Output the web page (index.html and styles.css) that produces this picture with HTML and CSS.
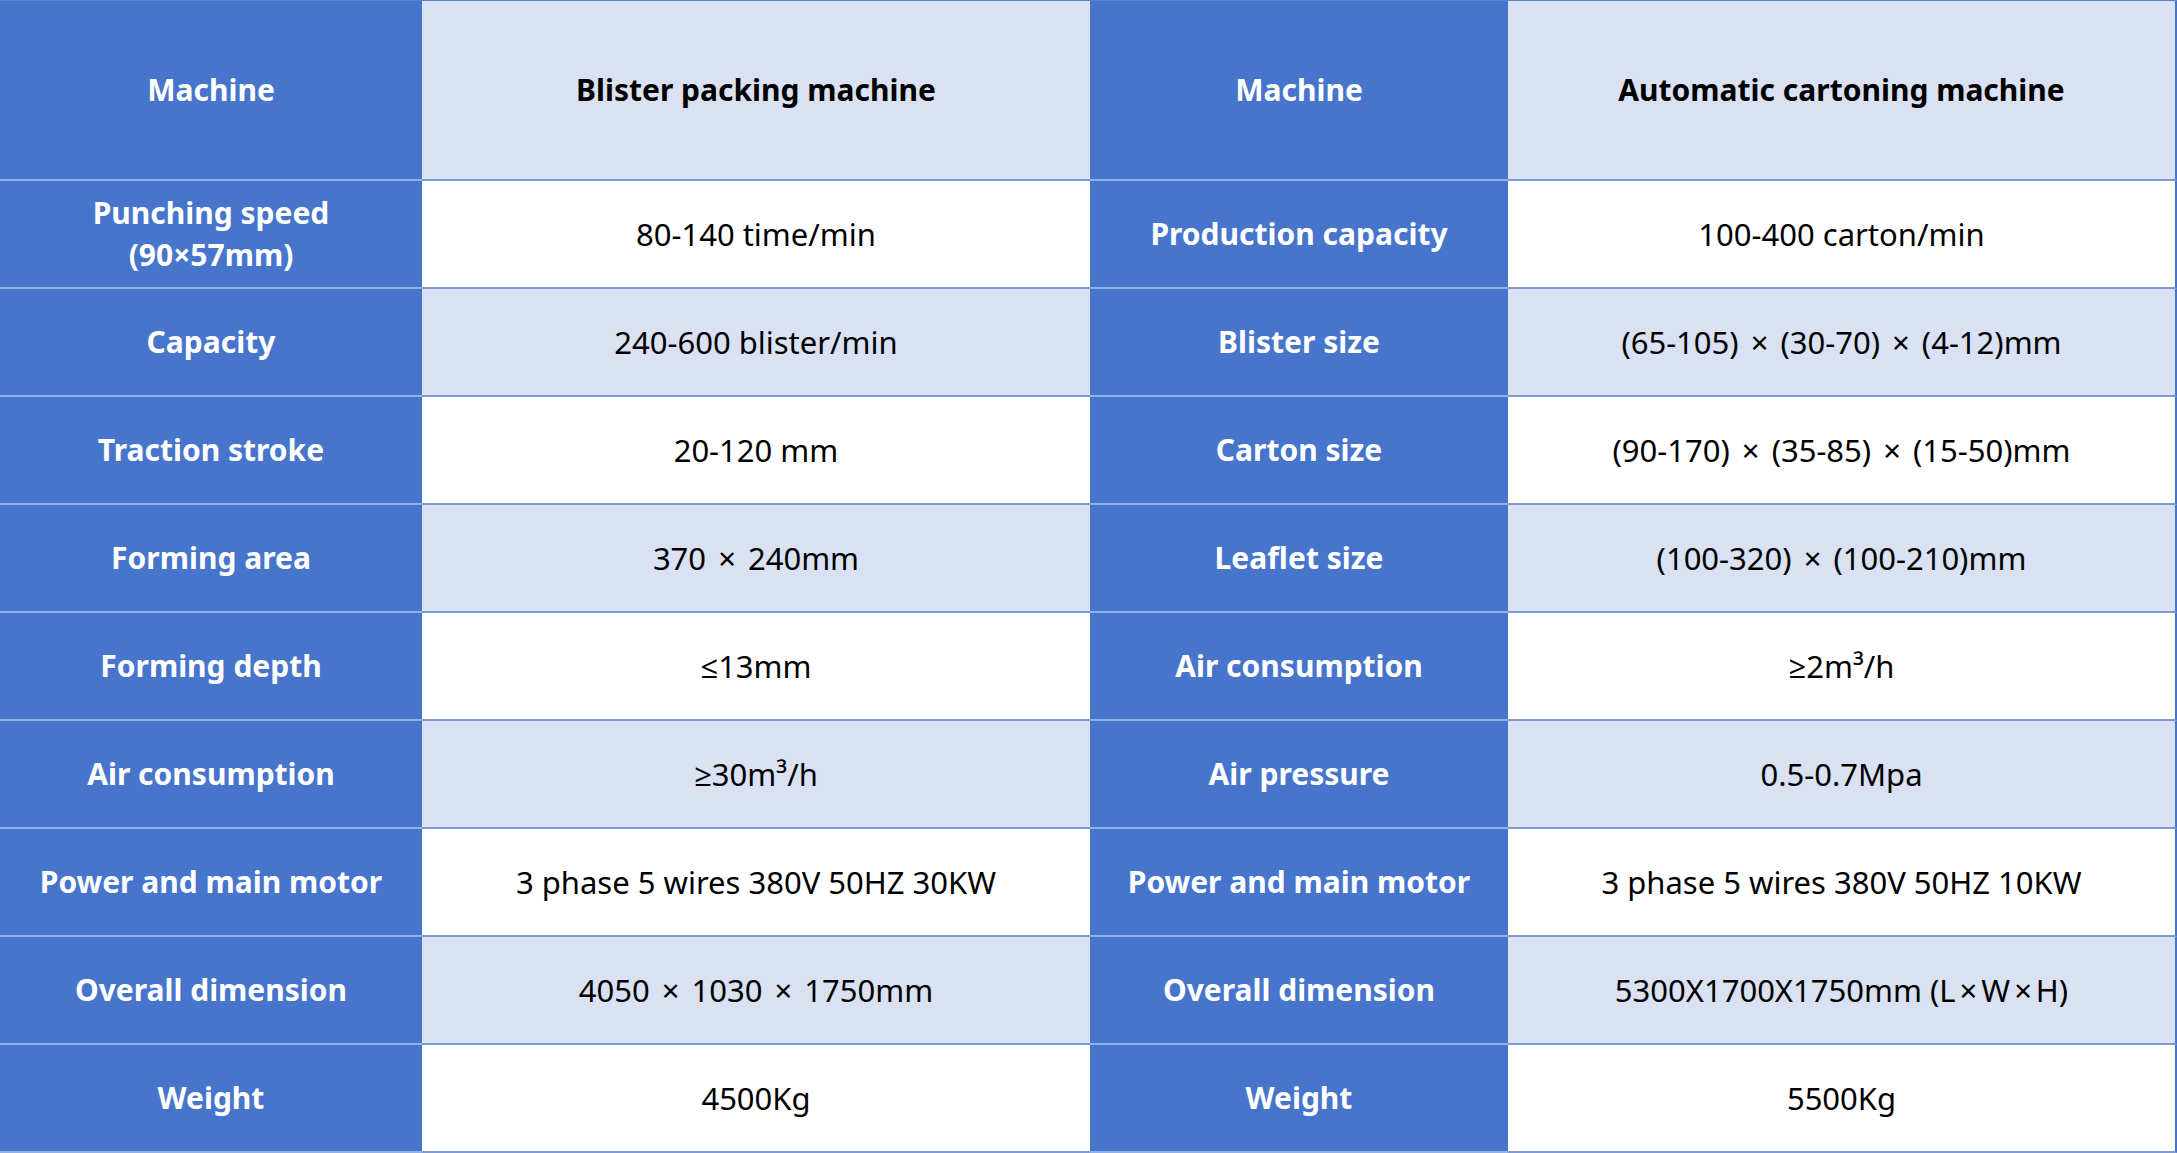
FILE: index.html
```html
<!DOCTYPE html>
<html>
<head>
<meta charset="utf-8">
<link rel="stylesheet" href="styles.css">
</head>
<body>
<div class="table">
  <div class="cell key head">Machine</div>
  <div class="cell val light head bold">Blister packing machine</div>
  <div class="cell key head">Machine</div>
  <div class="cell val light head bold last">Automatic cartoning machine</div>

  <div class="cell key">Punching speed<br>(90×57mm)</div>
  <div class="cell val">80-140 time/min</div>
  <div class="cell key">Production capacity</div>
  <div class="cell val last">100-400 carton/min</div>

  <div class="cell key">Capacity</div>
  <div class="cell val light">240-600 blister/min</div>
  <div class="cell key">Blister size</div>
  <div class="cell val light last">(65-105) <span class="x">×</span> (30-70) <span class="x">×</span> (4-12)mm</div>

  <div class="cell key">Traction stroke</div>
  <div class="cell val">20-120 mm</div>
  <div class="cell key">Carton size</div>
  <div class="cell val last">(90-170) <span class="x">×</span> (35-85) <span class="x">×</span> (15-50)mm</div>

  <div class="cell key">Forming area</div>
  <div class="cell val light">370 <span class="x">×</span> 240mm</div>
  <div class="cell key">Leaflet size</div>
  <div class="cell val light last">(100-320) <span class="x">×</span> (100-210)mm</div>

  <div class="cell key">Forming depth</div>
  <div class="cell val">≤13mm</div>
  <div class="cell key">Air consumption</div>
  <div class="cell val last">≥2m³/h</div>

  <div class="cell key">Air consumption</div>
  <div class="cell val light">≥30m³/h</div>
  <div class="cell key">Air pressure</div>
  <div class="cell val light last">0.5-0.7Mpa</div>

  <div class="cell key">Power and main motor</div>
  <div class="cell val">3 phase 5 wires 380V 50HZ 30KW</div>
  <div class="cell key">Power and main motor</div>
  <div class="cell val last">3 phase 5 wires 380V 50HZ 10KW</div>

  <div class="cell key">Overall dimension</div>
  <div class="cell val light">4050 <span class="x">×</span> 1030 <span class="x">×</span> 1750mm</div>
  <div class="cell key">Overall dimension</div>
  <div class="cell val light last">5300X1700X1750mm (L<span class="x">×</span>W<span class="x">×</span>H)</div>

  <div class="cell key">Weight</div>
  <div class="cell val">4500Kg</div>
  <div class="cell key">Weight</div>
  <div class="cell val last">5500Kg</div>
</div>
</body>
</html>
```
FILE: styles.css
```css
html, body {
  margin: 0;
  padding: 0;
  background: #ffffff;
}
body {
  width: 2177px;
  height: 1153px;
  overflow: hidden;
}
.table {
  display: grid;
  grid-template-columns: 422px 668px 418px 669px;
  grid-template-rows: 180px repeat(9, 108px);
  font-family: "Noto Sans", "Open Sans", "Liberation Sans", sans-serif;
  font-size: 30px;
  line-height: 42px;
  border-top: 1px solid #5d82cc;
}
.cell {
  display: flex;
  align-items: center;
  justify-content: center;
  text-align: center;
  box-sizing: border-box;
  white-space: pre-wrap;
}
.key {
  background: #4775cc;
  color: #ffffff;
  font-weight: 700;
  border-bottom: 2px solid #93b0e6;
}
.val {
  background: #ffffff;
  color: #000000;
  font-size: 31px;
  border-bottom: 2px solid #7d9ad6;
}
.val.light {
  background: #d9e1f2;
}
.val.head {
  font-size: 30px;
}
.bold {
  font-weight: 700;
}
.last {
  border-right: 2px solid #4a73c6;
}
.x {
  margin: 0 4px;
}
```
